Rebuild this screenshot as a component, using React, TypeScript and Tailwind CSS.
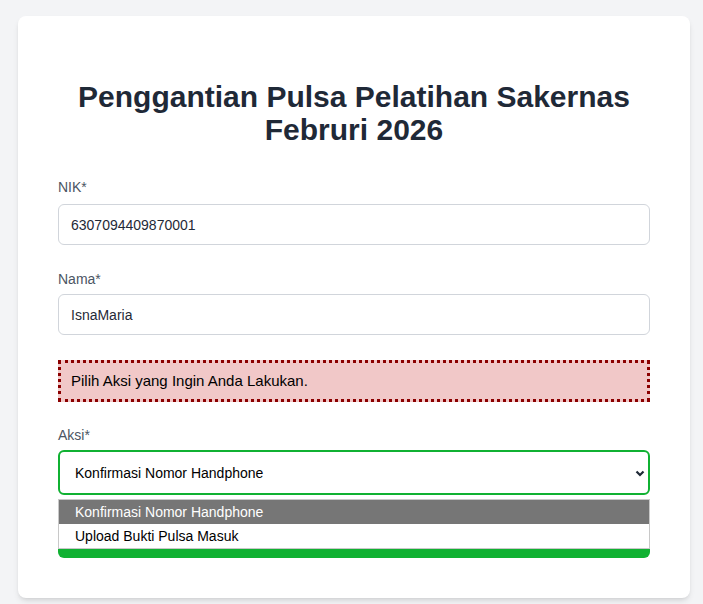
import React from 'react';

const font = { fontFamily: '"Liberation Sans", Arial, sans-serif' };

export default function App() {
    return (
        <div className="min-h-screen bg-[#f3f4f6] pt-4 pl-[18px] pr-[13px]" style={font}>
            <div className="bg-white rounded-lg shadow-md w-[672px] px-10 pt-[64px] pb-10">
                <h1 className="text-[30px] leading-[33px] font-bold text-center text-[#1f2937] mb-[31px]">
                    Penggantian Pulsa Pelatihan Sakernas Februri 2026
                </h1>

                <div className="flex flex-col">
                    <label className="text-sm leading-5 text-[#4b5563] mb-[7px]">NIK*</label>
                    <div className="h-[41px] border border-[#d1d5db] rounded-md px-3 flex items-center text-sm text-[#1f2937]">
                        6307094409870001
                    </div>
                </div>

                <div className="flex flex-col mt-[24px]">
                    <label className="text-sm leading-5 text-[#4b5563] mb-[5px]">Nama*</label>
                    <div className="h-[41px] border border-[#d1d5db] rounded-md px-3 flex items-center text-sm text-[#1f2937]">
                        IsnaMaria
                    </div>
                </div>

                <div className="mt-[25px] h-[42px] border-[3px] border-dotted border-[#8b0000] bg-[#f1c8c8] px-[10px] flex items-center text-[15px] text-black">
                    Pilih Aksi yang Ingin Anda Lakukan.
                </div>

                <div className="flex flex-col mt-[23px] relative">
                    <label className="text-sm leading-5 text-[#4b5563] mb-[5px]">Aksi*</label>
                    <div className="h-[45px] border-2 border-[#10b132] rounded-md pl-[15px] pr-[2px] flex items-center justify-between text-sm text-black">
                        <span>Konfirmasi Nomor Handphone</span>
                        <svg width="12" height="12" viewBox="0 0 12 12">
                            <path d="M2.5 4.5 L6 8 L9.5 4.5" fill="none" stroke="#1f2937" strokeWidth="2.2" />
                        </svg>
                    </div>

                    <button className="mt-[18px] h-[45px] w-full rounded-md bg-[#10b132] text-white font-bold text-sm">
                        Kirim
                    </button>

                    <div className="absolute left-0 right-0 top-[74px] border border-[#c8c8c8] bg-white text-sm">
                        <div className="h-6 bg-[#767676] text-white pl-4 flex items-center">Konfirmasi Nomor Handphone</div>
                        <div className="h-6 bg-white text-black pl-4 flex items-center">Upload Bukti Pulsa Masuk</div>
                    </div>
                </div>
            </div>
        </div>
    );
}
